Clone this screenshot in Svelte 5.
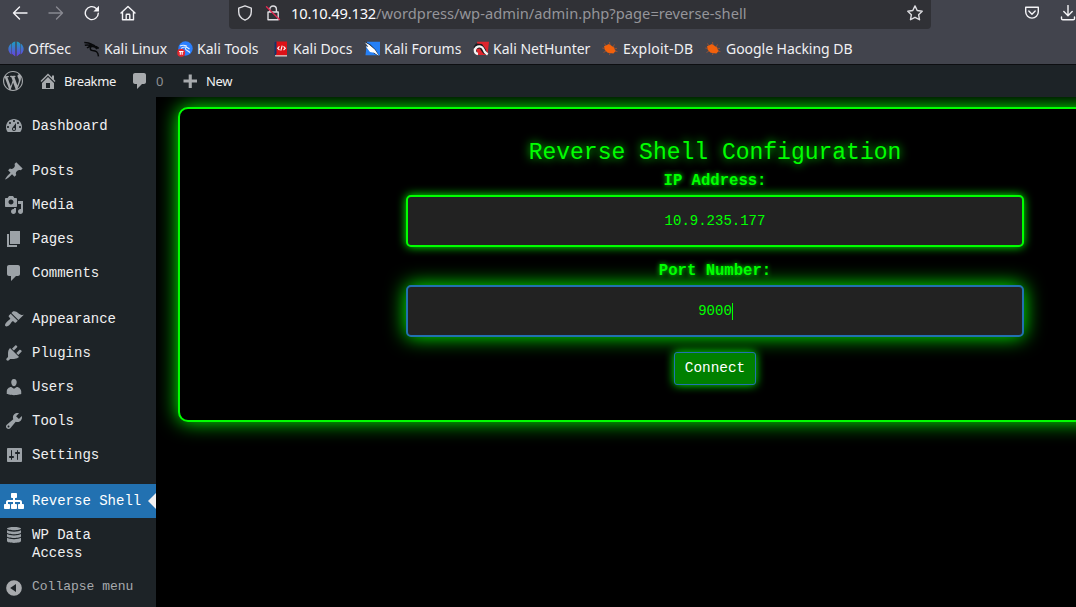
<script>
  const bookmarks = [
    { label: 'OffSec', icon: 'offsec' },
    { label: 'Kali Linux', icon: 'linux' },
    { label: 'Kali Tools', icon: 'tools' },
    { label: 'Kali Docs', icon: 'docs' },
    { label: 'Kali Forums', icon: 'forums' },
    { label: 'Kali NetHunter', icon: 'nethunter' },
    { label: 'Exploit-DB', icon: 'exploit' },
    { label: 'Google Hacking DB', icon: 'exploit' }
  ];
  const comment = 'M5 2h9c1.1 0 2 .9 2 2v7c0 1.1-.9 2-2 2h-2l-5 5v-5H5c-1.1 0-2-.9-2-2V4c0-1.1.9-2 2-2z';
  const groups = [
    [{ label: 'Dashboard', d: 'M3.76 16h12.48c1.1-1.37 1.76-3.11 1.76-5 0-4.42-3.58-8-8-8s-8 3.58-8 8c0 1.89.66 3.63 1.76 5zM10 4c.55 0 1 .45 1 1s-.45 1-1 1-1-.45-1-1 .45-1 1-1zM6 6c.55 0 1 .45 1 1s-.45 1-1 1-1-.45-1-1 .45-1 1-1zm8 0c.55 0 1 .45 1 1s-.45 1-1 1-1-.45-1-1 .45-1 1-1zm-5.37 5.55L12 7v6c0 1.1-.9 2-2 2s-2-.9-2-2c0-.57.24-1.08.63-1.45zM4 10c.55 0 1 .45 1 1s-.45 1-1 1-1-.45-1-1 .45-1 1-1zm12 0c.55 0 1 .45 1 1s-.45 1-1 1-1-.45-1-1 .45-1 1-1zm-5 3c0-.55-.45-1-1-1s-1 .45-1 1 .45 1 1 1 1-.45 1-1z' }],
    [
      { label: 'Posts', d: 'M10.44 3.02l1.82-1.82 6.36 6.35-1.83 1.82c-1.05-.68-2.48-.57-3.41.36l-.75.75c-.92.93-1.04 2.35-.35 3.41l-1.83 1.82-2.41-2.41-2.8 2.79c-.42.42-3.38 2.71-3.8 2.29s1.86-3.39 2.28-3.81l2.79-2.79L4.1 9.36l1.83-1.82c1.05.69 2.48.57 3.4-.36l.75-.75c.93-.92 1.05-2.35.36-3.41z' },
      { label: 'Media', d: 'M13 11V4c0-.55-.45-1-1-1h-1.67L9 1H5L3.67 3H2c-.55 0-1 .45-1 1v7c0 .55.45 1 1 1h10c.55 0 1-.45 1-1zM7 4.5c1.38 0 2.5 1.12 2.5 2.5S8.38 9.5 7 9.5 4.5 8.38 4.5 7 5.62 4.5 7 4.5zM14 6h5v10.5c0 1.38-1.12 2.5-2.5 2.5S14 17.88 14 16.5s1.12-2.5 2.5-2.5c.17 0 .34.02.5.05V9h-3V6zm-4 8.05V13h2v3.5c0 1.38-1.12 2.5-2.5 2.5S7 17.88 7 16.5 8.12 14 9.5 14c.17 0 .34.02.5.05z' },
      { label: 'Pages', d: 'M6 15V2h10v13H6zm-1 1h8v2H3V5h2v11z' },
      { label: 'Comments', d: comment }
    ],
    [
      { label: 'Appearance', d: 'M14.48 11.06L7.41 3.99l1.5-1.5c.5-.56 2.3-.47 3.51.32 1.21.8 1.43 1.28 2.91 2.1 1.18.64 2.45 1.26 4.45.85zm-.71.71L6.7 4.7 4.93 6.47c-.39.39-.39 1.02 0 1.41l1.06 1.06c.39.39.39 1.03 0 1.42-.6.6-1.43 1.11-2.21 1.69-.35.26-.7.53-1.01.84C1.43 14.23.4 16.08 1.4 17.07c.99 1 2.84-.03 4.18-1.36.31-.31.58-.66.85-1.02.57-.78 1.08-1.61 1.69-2.21.39-.39 1.02-.39 1.41 0l1.06 1.06c.39.39 1.02.39 1.41 0z' },
      { label: 'Plugins', d: 'M13.11 4.36L9.87 7.6 8 5.73l3.24-3.24c.35-.34 1.05-.2 1.56.32.52.51.66 1.21.31 1.55zm-8 1.77l.91-1.12 9.01 9.01-1.19.84c-.71.71-2.63 1.16-3.82 1.16H6.14L4.9 17.26c-.59.59-1.54.59-2.12 0-.59-.58-.59-1.53 0-2.12l1.24-1.24v-3.88c0-1.13.4-3.19 1.09-3.89zm7.26 3.97l3.24-3.24c.34-.35 1.04-.21 1.55.31.52.51.66 1.21.31 1.55l-3.24 3.25z' },
      { label: 'Users', d: 'M10 9.25c-2.27 0-2.73-3.44-2.73-3.44C7 4.02 7.82 2 9.97 2c2.16 0 2.98 2.02 2.71 3.81 0 0-.41 3.44-2.68 3.44zm0 2.57L12.72 10c2.39 0 4.52 2.33 4.52 4.53v2.49s-3.65 1.13-7.24 1.13c-3.65 0-7.24-1.13-7.24-1.13v-2.49c0-2.25 1.94-4.48 4.47-4.48z' },
      { label: 'Tools', d: 'M16.68 9.77c-1.34 1.34-3.3 1.67-4.95.99l-5.41 6.52c-.99.99-2.59.99-3.58 0s-.99-2.59 0-3.57l6.52-5.42c-.68-1.65-.35-3.61.99-4.95 1.28-1.28 3.12-1.62 4.72-1.06l-2.89 2.89 2.82 2.82 2.86-2.87c.53 1.58.18 3.39-1.08 4.65zM3.81 16.21c.4.39 1.04.39 1.43 0 .4-.4.4-1.04 0-1.43-.39-.4-1.03-.4-1.43 0-.39.39-.39 1.03 0 1.43z' },
      { label: 'Settings', d: 'M18 16V4c0-.55-.45-1-1-1H4c-.55 0-1 .45-1 1v12c0 .55.45 1 1 1h13c.55 0 1-.45 1-1zM8 11h1c.55 0 1 .45 1 1s-.45 1-1 1H8v1.5c0 .28-.22.5-.5.5s-.5-.22-.5-.5V13H6c-.55 0-1-.45-1-1s.45-1 1-1h1V5.5c0-.28.22-.5.5-.5s.5.22.5.5V11zm5-2h-1c-.55 0-1-.45-1-1s.45-1 1-1h1V5.5c0-.28.22-.5.5-.5s.5.22.5.5V7h1c.55 0 1 .45 1 1s-.45 1-1 1h-1v5.5c0 .28-.22.5-.5.5s-.5-.22-.5-.5V9z' }
    ],
    [
      { label: 'Reverse Shell', active: true, d: 'M18 13h1c.55 0 1 .45 1 1.01v2.98c0 .56-.45 1.01-1 1.01h-4c-.55 0-1-.45-1-1.01v-2.98c0-.56.45-1.01 1-1.01h1v-2h-5v2h1c.55 0 1 .45 1 1.01v2.98c0 .56-.45 1.01-1 1.01H8c-.55 0-1-.45-1-1.01v-2.98c0-.56.45-1.01 1-1.01h1v-2H4v2h1c.55 0 1 .45 1 1.01v2.98C6 17.55 5.55 18 5 18H1c-.55 0-1-.45-1-1.01v-2.98C0 13.45.45 13 1 13h1v-2c0-1.1.9-2 2-2h5V7H8c-.55 0-1-.45-1-1.01V3.01C7 2.45 7.45 2 8 2h4c.55 0 1 .45 1 1.01v2.98C13 6.55 12.55 7 12 7h-1v2h5c1.1 0 2 .9 2 2v2z' },
      { label: 'WP Data Access', d: 'M3 3.6C3 1.4 17 1.4 17 3.6S3 5.8 3 3.6zM3 5.2c2 1.9 12 1.9 14 0v2.2c0 2.3-14 2.3-14 0zM3 9c2 1.9 12 1.9 14 0v2.2c0 2.3-14 2.3-14 0zM3 12.8c2 1.9 12 1.9 14 0V16c0 2.5-14 2.5-14 0z' }
    ]
  ];
</script>

<div class="screen">
  <header class="browser">
    <div class="toolbar">
      <svg class="nav" viewBox="0 0 16 16"><path d="M15 8H1.500M7.500 2L1.500 8l6 6" /></svg>
      <svg class="nav dim" viewBox="0 0 16 16"><path d="M1 8h13.500M8.500 2l6 6-6 6" /></svg>
      <svg class="nav" viewBox="0 0 16 16"><path d="M14.300 8.200A6.500 6.500 0 1 1 12.300 3.400L14 5" /><path class="solid" d="M15 .8v5.600H9.400z" /></svg>
      <svg class="nav" viewBox="0 0 16 16"><path d="M1 8L8 1.500 15 8M2.500 7v7.700h11V7M6.200 14.500v-4.500q0-.7.7-.7h2.200q.7 0 .7.7v4.500" /></svg>
      <div class="url">
        <svg class="nav" viewBox="0 0 16 16"><path d="M8 .8l6.300 2.400v3.500c0 4-2.600 7-6.300 8.500C4.300 13.700 1.700 10.700 1.700 6.700V3.200z" /></svg>
        <svg class="nav lock" viewBox="0 0 16 16"><path d="M3 7h10.200v7.800H3zM4.800 7V4.300a3.300 3.300 0 0 1 6.600 0V7" /><path class="slash" d="M1.500 1.800L14.500 14.500" /></svg>
        <span class="address"><b>10.10.49.132</b>/wordpress/wp-admin/admin.php?page=reverse-shell</span>
        <svg class="nav star" viewBox="0 0 16 16"><path d="M8 .9l2.200 4.600 5 .7-3.600 3.500.9 5L8 12.300l-4.500 2.400.9-5L.8 6.200l5-.7z" /></svg>
      </div>
      <svg class="nav" viewBox="0 0 16 16"><path d="M1.700 2.200h12.600v4.600a6.300 6.300 0 0 1-12.600 0zM4.800 6L8 9.200 11.200 6" /></svg>
      <svg class="nav" viewBox="0 0 16 16"><path d="M8 .5v10M3.800 6.500L8 10.700l4.200-4.200M1.500 12v1.400c0 .8.500 1.300 1.300 1.300h10.400c.8 0 1.300-.5 1.300-1.300V12" /></svg>
    </div>
    <nav class="bookmarks">
      {#each bookmarks as b}
        <a href="#top" class={b.icon}>
          <svg viewBox="0 0 16 16">
            {#if b.icon === 'offsec'}
              <defs><linearGradient id="os" x1="0" y1="0" x2="0" y2="1"><stop offset="0" stop-color="#1b9fc0" /><stop offset="1" stop-color="#6a3fe0" /></linearGradient></defs>
              <path fill="url(#os)" d="M3.500 2.500v11C-.7 11-.7 5 3.500 2.500zM4 2.200Q5.500 .9 7.300.6v14.800L4 12.800zM8.700.6q1.800.3 3.300 1.600v10.600l-3.300 2.600zM12.500 2.500c4.200 2.500 4.200 8.500 0 11z" />
            {:else if b.icon === 'linux'}
              <path fill="none" stroke="#08090b" stroke-width="1.500" d="M.3 1.500c3 0 5 .3 7.700 2M.8 4.300c3-.6 5-.3 7.200.4M3 7c1.500-1.300 3-1.900 5-1.700 2.700.2 4 1 5.200 2.700M7.800 3.500c1.800.5 3 1.300 4 2.500M7.500 5.500c-2 1.500-1.500 3.700 1 4 3.500.3 5.500 1 6 5.800M12 5.500l2.800 1.800" />
            {:else if b.icon === 'tools'}
              <circle cx="8.500" cy="7.500" r="7.200" fill="#2a7fff" />
              <path fill="none" stroke="#e8f1ff" stroke-width="1.100" d="M3 5c2.500-1.200 5-.8 7 .3M4 7.500C6.500 5.500 10 5.800 12.500 8M8.500 7c-.8 2.500 2 2 4.500 4.500" />
              <circle cx="4.200" cy="11.800" r="4" fill="#e3262e" />
              <path stroke="#fff" stroke-width="1.100" fill="none" d="M2 10.500h4.500M3.300 10.500v3.300M5.200 10.500v3.300" />
            {:else if b.icon === 'docs'}
              <path fill="#dd1117" d="M3 .5h11v12.800H3z" /><path fill="#14356b" d="M1.500 1.200L3.500.5v13l-2 1z" />
              <path fill="#d8d3d0" d="M2.200 14H14v1.500H2.200z" /><path fill="#dd1117" d="M3 13h11v1.200H3z" /><path fill="none" stroke="#fff" stroke-width="1.100" d="M6.500 5.300L4.700 7.200l1.800 1.900M10.500 5.300l1.800 1.900-1.800 1.900M9.200 4.700l-1.400 5" />
            {:else if b.icon === 'forums'}
              <path fill="#2680f5" d="M3 .8h13v13.500H1.500z" /><path fill="#0c1521" d="M.3 .5l6 3 5.500 5.500 3.500 6.500-5-3-7-7z" />
              <path fill="#fff" d="M.6 1.300l4.700 2.400L11 8.700l4 6.300-5-3.300L6 11 1.800 5.500l2.500.3z" />
            {:else if b.icon === 'nethunter'}
              <path fill="#df252d" d="M4 .8h12L14.500 14H5z" /><path fill="#191a1e" d="M.5 6L3 2.500l6 .5 3.500 5L15 14l-4-1-3-3-4 3z" /><path fill="#df252d" d="M3 8l4-.5 3 6-5 .3z" />
              <path fill="none" stroke="#f4f4f4" stroke-width="2.300" d="M5 13C1.500 12.500 .8 8.500 3.300 6.500c3-2.200 6.300-.8 7 1.500.5 1.800 2.200 4 4.400 5.500" />
            {:else}
              <path fill="#f2610c" d="M2 5.200l5-2.300 4.700 3.300 2 3.800-2.300 2.500-5.700-.7L2.800 9z" />
              <path fill="none" stroke="#a9542d" stroke-width=".8" d="M4 5L2.500 2.500M8 4l-.5-3M11 6l1.500-2.500M3 7.500L.3 7M4 10l-2.500 1.500M8 12l-.5 2M12 8l3-.7M13 10l2.500.7" />
            {/if}
          </svg><span>{b.label}</span>
        </a>
      {/each}
    </nav>
  </header>

  <div class="adminbar">
    <svg class="wp" viewBox="0 0 20 20"><path d="M20 10c0-5.510-4.490-10-10-10C4.480 0 0 4.490 0 10c0 5.520 4.480 10 10 10 5.510 0 10-4.480 10-10zM7.780 15.370L4.370 6.220c.55-.02 1.170-.08 1.170-.08.5-.06.44-1.130-.06-1.110 0 0-1.450.11-2.370.11-.18 0-.37 0-.58-.01C4.120 2.690 6.870 1.110 10 1.110c2.330 0 4.450.87 6.050 2.340-.68-.11-1.650.39-1.650 1.580 0 .74.45 1.360.9 2.100.35.61.55 1.360.55 2.460 0 1.490-1.400 5-1.400 5l-3.030-8.370c.54-.02.82-.17.82-.17.5-.05.44-1.250-.06-1.220 0 0-1.440.12-2.380.12-.87 0-2.330-.12-2.330-.12-.5-.03-.56 1.200-.06 1.220l.92.08 1.260 3.410zM17.410 10c.24-.64.74-1.870.43-4.250.7 1.290 1.050 2.710 1.050 4.250 0 3.290-1.730 6.240-4.400 7.780.97-2.590 1.940-5.200 2.920-7.780zM6.100 18.090C3.120 16.650 1.110 13.530 1.110 10c0-1.300.23-2.480.72-3.590C3.250 10.300 4.670 14.200 6.100 18.090zm4.030-6.630l2.580 6.980c-.86.29-1.760.45-2.710.45-.79 0-1.570-.11-2.290-.33.81-2.380 1.620-4.740 2.420-7.100z" /></svg>
    <span class="item home"><svg viewBox="0 0 20 20"><path d="M16 8.500l1.530 1.530-1.060 1.060L10 4.600l-6.470 6.490-1.060-1.060L10 2.500l4 4v-2h2v4zm-6-2.460l6 5.990V18H4v-5.970zM12 17v-5H8v5h4z" /></svg><span>Breakme</span></span>
    <span class="item talk"><svg viewBox="0 0 20 20"><path d={comment} /></svg><span class="count">0</span></span>
    <span class="item new"><svg viewBox="0 0 20 20"><path d="M17 8.500v3h-5.200V17H8.700v-5.500H3.500v-3h5.200V3.500h3.100v5z" /></svg><span>New</span></span>
  </div>

  <div class="body">
    <aside>
      {#each groups as group}
        <ul>
          {#each group as item}
            <li class:active={item.active}>
              <svg viewBox="0 0 20 20"><path d={item.d} fill-rule={item.label === 'Dashboard' ? 'evenodd' : 'nonzero'} /></svg>
              <span>{item.label}</span>
            </li>
          {/each}
        </ul>
      {/each}
      <div class="collapse">
        <svg viewBox="0 0 20 20"><path fill-rule="evenodd" d="M10 2.160a7.840 7.840 0 1 1 0 15.680 7.840 7.840 0 0 1 0-15.680zm2 11.720V6.120L6.180 9.970z" /></svg>
        <span>Collapse menu</span>
      </div>
    </aside>
    <main>
      <section class="card">
        <h1>Reverse Shell Configuration</h1>
        <div class="label">IP Address:</div>
        <div class="field">10.9.235.177</div>
        <div class="label">Port Number:</div>
        <div class="field focus">9000<i class="caret"></i></div>
        <button>Connect</button>
      </section>
    </main>
  </div>
</div>

<style>
  :global(body) { margin: 0; overflow: hidden; background: #000; }
  .screen { width: 1076px; height: 607px; overflow: hidden; display: flex; flex-direction: column; background: #000; font-family: "Noto Sans", sans-serif; }
  .screen :is(div, section, li, main, aside) { box-sizing: border-box; }
  svg { flex: none; display: block; }
  .browser { flex: none; height: 64px; background: #42444d; border-bottom: 1px solid #0d0e11; color: #fbfbfe; }
  .toolbar { height: 29px; display: flex; align-items: flex-start; padding-left: 12px; }
  .nav { width: 16px; height: 16px; margin: 5px 20px 0 0; fill: none; stroke: #f4f4f7; stroke-width: 1.4; stroke-linejoin: round; stroke-linecap: round; }
  .nav.dim { stroke: #888991; }
  .nav .solid { fill: #f4f4f7; stroke: none; }
  .nav .slash { stroke: #e22850; }
  .url { flex: none; width: 702px; height: 29px; margin: 0 93px 0 73px; background: #303136; border-radius: 0 0 4px 4px; display: flex; align-items: flex-start; padding: 0 8px; }
  .url .nav { margin-right: 12px; stroke: #dedee2; }
  .url .nav.lock { margin-right: 10px; }
  .url .nav.star { margin: 5px 0 0; }
  .address { flex: 1; font-size: 14.67px; line-height: 27px; letter-spacing: 0.03px; color: #95959a; white-space: nowrap; }
  .address b { font-weight: 400; letter-spacing: -0.18px; color: #fbfbfe; }
  .bookmarks { height: 35px; padding: 2px 0 0 8px; display: grid; grid-template-columns: 76px 93px 96px 91px 109px 129px 103px 150px; align-items: center; }
  .bookmarks a { display: flex; align-items: center; gap: 4px; color: #f0f0f3; text-decoration: none; font-size: 14px; line-height: 20px; white-space: nowrap; height: 32px; }
  .bookmarks svg { width: 16px; height: 16px; }
  .bookmarks .exploit { gap: 5px; letter-spacing: 0.2px; }
  .bookmarks .exploit:last-child { letter-spacing: -0.04px; }
  .adminbar { position: relative; z-index: 2; flex: none; height: 32px; background: #1d2327; display: flex; align-items: center; font-size: 13px; color: #f0f0f1; }
  .adminbar svg { width: 20px; height: 20px; fill: #a7aaad; }
  .adminbar .wp { margin-left: 3px; }
  .item { display: flex; align-items: center; gap: 6px; }
  .home { width: 92px; margin-left: 15px; letter-spacing: -0.4px; }
  .talk { width: 50px; }
  .count { color: #8d9093; }
  .new { letter-spacing: -0.3px; }
  .body { flex: 1; min-height: 0; display: flex; font-family: "Liberation Mono", monospace; }
  aside { position: relative; z-index: 1; flex: none; width: 156px; background: #1d2327; padding-top: 12px; color: #f0f0f1; font-size: 14px; line-height: 18px; }
  ul { list-style: none; margin: 0 0 12px; padding: 0; }
  ul:first-child { margin-bottom: 11px; }
  ul:last-of-type { margin: 0; }
  li { display: flex; min-height: 34px; padding: 8px 10px 8px 4px; gap: 8px; }
  li svg { width: 20px; height: 20px; margin: -1px 0; fill: #9ca2a7; }
  li.active { position: relative; background: #2271b1; color: #fff; white-space: nowrap; }
  li.active svg { fill: #fff; }
  li.active::after { content: ""; position: absolute; right: 0; top: 9px; border: 8px solid transparent; border-left: 0; border-right-color: #f0f0f1; }
  .collapse { display: flex; padding: 8px 0 0 4px; gap: 8px; color: #a7aaad; font-size: 13px; }
  .collapse svg { width: 20px; height: 20px; fill: #a7aaad; }
  main { flex: 1; min-width: 0; padding: 10px 0 0 22px; }
  .card { width: 1074px; height: 315px; border: 2px solid #0f0; border-radius: 10px; box-shadow: 0 0 20px #0f0; background: #000; color: #0f0; display: flex; flex-direction: column; align-items: center; padding-top: 29px; }
  h1 { margin: 0; font-size: 23px; line-height: 30px; font-weight: 400; text-shadow: 0 0 10px #0f0; }
  .label { font-size: 15.6px; font-weight: 700; line-height: 22px; height: 28px; padding-top: 2px; text-shadow: 0 0 5px #0f0; }
  h1 + .label { height: 27px; }
  .field { width: 618px; height: 52px; border: 2px solid #0f0; border-radius: 5px; background: #222; box-shadow: 0 0 10px #0f0; font-size: 14px; line-height: 48px; margin-bottom: 10px; display: flex; justify-content: center; align-items: center; }
  .field + .label { padding-top: 3px; }
  .field.focus { border-color: #2271b1; box-shadow: 0 0 20px #0f0; margin-bottom: 15px; }
  .caret { width: 1px; height: 17px; margin-right: -1px; background: #0f0; }
  button { box-sizing: border-box; width: 82px; height: 33px; padding: 0 0 2px; border: 1px solid #2271b1; border-radius: 3px; background: green; color: #fff; box-shadow: 0 0 10px #0f0; font: 14.4px/28px "Liberation Mono", monospace; }
</style>
